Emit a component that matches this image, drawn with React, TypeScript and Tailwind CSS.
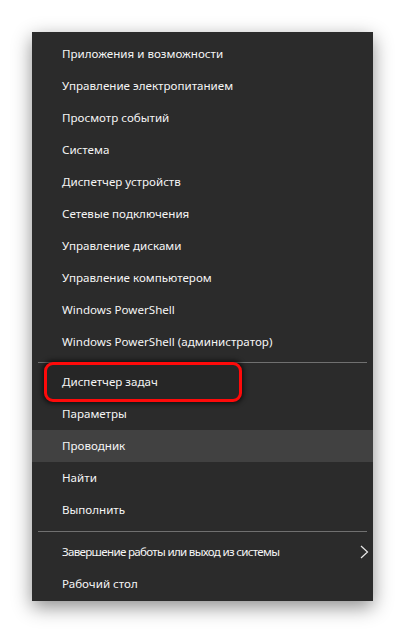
const topItems = [
  'Приложения и возможности',
  'Управление электропитанием',
  'Просмотр событий',
  'Система',
  'Диспетчер устройств',
  'Сетевые подключения',
  'Управление дисками',
  'Управление компьютером',
  'Windows PowerShell',
  'Windows PowerShell (администратор)',
];

const midItems = ['Диспетчер задач', 'Параметры', 'Проводник', 'Найти', 'Выполнить'];

function Item({ label, active, boxed, arrow }: { label: string; active?: boolean; boxed?: boolean; arrow?: boolean }) {
  return (
    <div className={`relative h-8 flex items-center pl-[30px] pr-[4px] ${active ? 'bg-[#414141]' : ''}`}>
      {boxed && (
        <div className="absolute left-[12px] top-[-4px] w-[198px] h-[40px] rounded-[9px] border-[3px] border-[#ff0a0a] shadow-[0_0_4px_2px_rgba(0,0,0,0.55)] bg-[#262626]" />
      )}
      <span className={`relative text-[11.6px] text-[#f5f5f5] leading-none ${arrow ? 'tracking-[-0.7px]' : ''}`}>{label}</span>
      {arrow && (
        <svg className="ml-auto" width="9" height="14" viewBox="0 0 9 14" fill="none">
          <path d="M1 1 L7.5 7 L1 13" stroke="#e8e8e8" strokeWidth="1.2" />
        </svg>
      )}
    </div>
  );
}

export default function App() {
  return (
    <div className="w-[405px] h-[633px] bg-white pt-[32px] pl-[32px]" style={{ fontFamily: '"Noto Sans", "Open Sans", sans-serif' }}>
      <div className="w-[341px] h-[569px] bg-[#2b2b2b] pt-[6px] shadow-[0_6px_18px_rgba(0,0,0,0.45)]">
        {topItems.map((t) => (
          <Item key={t} label={t} />
        ))}
        <div className="h-[8px] flex items-center px-[6px]">
          <div className="h-px w-full bg-[#707070]" />
        </div>
        {midItems.map((t) => (
          <Item key={t} label={t} active={t === 'Проводник'} boxed={t === 'Диспетчер задач'} />
        ))}
        <div className="h-[10px] flex items-center px-[6px]">
          <div className="h-px w-full bg-[#707070]" />
        </div>
        <Item label="Завершение работы или выход из системы" arrow />
        <Item label="Рабочий стол" />
      </div>
    </div>
  );
}
